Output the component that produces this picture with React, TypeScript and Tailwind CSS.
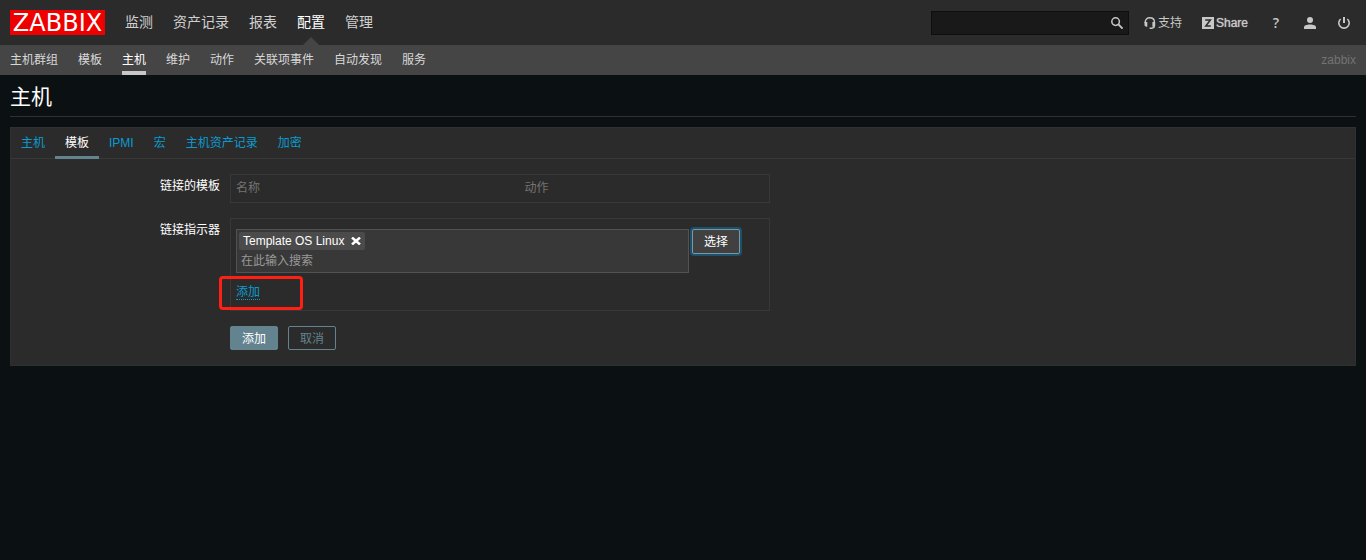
import { clsx } from "clsx";

const mainMenu = ["监测", "资产记录", "报表", "配置", "管理"];
const subMenu = ["主机群组", "模板", "主机", "维护", "动作", "关联项事件", "自动发现", "服务"];
const tabs = ["主机", "模板", "IPMI", "宏", "主机资产记录", "加密"];

function SearchIcon() {
    return (
        <svg width="12" height="12" viewBox="0 0 12 12" fill="none" stroke="#c8c8c8" aria-hidden="true">
            <circle cx="4.6" cy="4.6" r="3.8" strokeWidth="1.5" />
            <path d="M7.4 7.4l4.2 4.2" strokeWidth="1.9" />
        </svg>
    );
}

function SupportIcon() {
    return (
        <svg width="12" height="12" viewBox="0 0 12 12" aria-hidden="true">
            <path d="M1.2 6V5.2C1.2 2.6 3.1.8 5.8.8s4.6 1.8 4.6 4.4V8.6c0 1.7-1 2.6-2.6 2.6H5.6" fill="none" stroke="#c8c8c8" strokeWidth="1.4" />
            <path d="M.5 5h2.8v4.8H2L.5 8.4zM8.4 5h2.7v3.4L9.8 9.8H8.4z" fill="#c8c8c8" />
        </svg>
    );
}

function ShareIcon() {
    return (
        <svg width="12" height="12" viewBox="0 0 12 12" aria-hidden="true">
            <rect width="12" height="12" fill="#c8c8c8" />
            <path d="M3.2 3h5.2L3.8 9h5" fill="none" stroke="#2b2b2b" strokeWidth="1.5" />
        </svg>
    );
}

function UserIcon() {
    return (
        <svg width="12" height="12" viewBox="0 0 12 12" fill="#c8c8c8" aria-hidden="true">
            <circle cx="6" cy="3" r="3" />
            <path d="M0 12v-1.6C0 8.6 2.6 7.6 6 7.6s6 1 6 2.8V12z" />
        </svg>
    );
}

function PowerIcon() {
    return (
        <svg width="12" height="12" viewBox="0 0 12 12" fill="none" stroke="#c8c8c8" aria-hidden="true">
            <path d="M2.6 2a5.2 5.2 0 1 0 6.8 0" strokeWidth="1.6" />
            <path d="M6 0v6" strokeWidth="2" />
        </svg>
    );
}

function Header() {
    return (
        <header>
            <div className="flex h-[45px] items-center justify-between bg-[#2b2b2b] px-[10px]">
                <div className="flex items-center gap-5">
                    <a href="#" className="flex h-[25px] w-[95px] items-center justify-center bg-[#ee0000] font-['DejaVu_Sans'] text-[24px] leading-6 text-white">
                        ZABBIX
                    </a>
                    <nav className="flex gap-5 text-[14px] leading-[45px]">
                        {mainMenu.map((item) => (
                            <a
                                key={item}
                                href="#"
                                className={clsx("relative h-[45px]", item === "配置" ? "text-white" : "text-[#d0d0d0]")}
                            >
                                {item}
                                {item === "配置" && (
                                    <svg className="absolute bottom-0 left-1/2 -translate-x-1/2" width="16" height="8" viewBox="0 0 16 8">
                                        <path d="M0 8l8-8 8 8z" fill="#454545" />
                                    </svg>
                                )}
                            </a>
                        ))}
                    </nav>
                </div>
                <div className="flex h-6 items-center text-[#c8c8c8]">
                    <form className="relative mr-[15px]">
                        <input
                            type="text"
                            aria-label="搜索"
                            className="block h-6 w-[198px] border border-[#0f0f0f] bg-[#191919] pr-6 pl-1 outline-none"
                        />
                        <button type="button" aria-label="搜索" className="absolute top-[6px] right-[6px]">
                            <SearchIcon />
                        </button>
                    </form>
                    <a href="#" className="mr-5 flex items-center gap-[2px]">
                        <SupportIcon />
                        支持
                    </a>
                    <a href="#" className="mr-[22px] flex items-center gap-[2px] text-shadow-[0_0_1px_#c8c8c8]">
                        <ShareIcon />
                        Share
                    </a>
                    <div className="flex items-center gap-[22px] pr-[6px]">
                        <a href="#" className="w-3 text-center font-['Open_Sans'] text-[14px] font-semibold">?</a>
                        <a href="#" aria-label="用户"><UserIcon /></a>
                        <a href="#" aria-label="登出"><PowerIcon /></a>
                    </div>
                </div>
            </div>
            <div className="flex h-[30px] justify-between bg-[#454545] px-[10px] leading-[30px]">
                <nav className="flex gap-5">
                    {subMenu.map((item) => (
                        <a
                            key={item}
                            href="#"
                            className={clsx("h-[30px]", item === "主机" ? "border-b-4 border-[#c8c8c8] text-white" : "text-[#d8d8d8]")}
                        >
                            {item}
                        </a>
                    ))}
                </nav>
                <span className="text-[#737373]">zabbix</span>
            </div>
        </header>
    );
}

function TemplateForm() {
    return (
        <form className="grid grid-cols-[209px_540px] gap-x-[10px] gap-y-[15px] py-[15px]">
            <span className="text-right leading-6 text-white">链接的模板</span>
            <div className="border border-[#383838]">
                <table className="w-full text-left leading-[27px] text-[#737373]">
                    <thead>
                        <tr>
                            <th className="w-[54%] px-[5px] py-0 font-normal">名称</th>
                            <th className="px-[3px] py-0 font-normal">动作</th>
                        </tr>
                    </thead>
                </table>
            </div>

            <label htmlFor="template" className="text-right leading-6 text-white">链接指示器</label>
            <div className="relative border border-[#383838] px-[5px] py-[10px]">
                <div className="flex items-start gap-[3px]">
                    <div className="h-11 w-[453px] border border-[#525252] bg-[#383838] p-[2px]">
                        <span className="flex h-[18px] w-fit items-center gap-[7px] rounded-[2px] bg-[#4b4b4b] px-1 text-white">
                            Template OS Linux
                            <button type="button" aria-label="移除">
                                <svg width="10" height="8" viewBox="0 0 10 8" stroke="#fff" strokeWidth="2.6">
                                    <path d="M1 .6l8 6.8M9 .6L1 7.4" />
                                </svg>
                            </button>
                        </span>
                        <input
                            id="template"
                            type="text"
                            placeholder="在此输入搜索"
                            className="block h-[22px] w-full bg-transparent px-[2px] text-white outline-none placeholder:text-[#999999]"
                        />
                    </div>
                    <button type="button" className="h-[25px] rounded-[2px] border border-[#7c98a1] bg-[#414141] px-[11px] text-white shadow-[0_0_0_2px_#1c516b]">
                        选择
                    </button>
                </div>
                <a href="#" className="mt-[11px] block h-4 w-fit border-b border-dotted border-[#0a9bd0] leading-4 text-[#0a9bd0]">
                    添加
                </a>
                {/* red frame around the add link */}
                <div className="pointer-events-none absolute bottom-0 -left-3 h-[34px] w-[84px] rounded-[4px] border-3 border-[#ff2013]" />
            </div>

            <div className="col-start-2 flex gap-[10px]">
                <button type="button" className="h-6 rounded-[2px] border border-[#63838e] bg-[#63838e] px-[11px] leading-6 text-white">
                    添加
                </button>
                <button type="button" className="h-6 rounded-[2px] border border-[#63838e] px-[11px] leading-6 text-[#63838e]">
                    取消
                </button>
            </div>
        </form>
    );
}

export default function App() {
    return (
        <div className="min-h-screen bg-[#0b1013] font-['Liberation_Sans','Noto_Sans_CJK_SC',sans-serif] text-[12px] leading-4">
            <Header />
            <main className="px-[10px]">
                <h1 className="mb-[10px] h-[42px] border-b border-[#303030] text-[21px] leading-[44px] text-white">主机</h1>
                <section className="border border-[#303030] bg-[#2b2b2b]">
                    <div className="flex h-[31px] border-b border-[#383838] leading-[30px]">
                        {tabs.map((tab) => (
                            <a
                                key={tab}
                                href="#"
                                className={clsx("h-[31px] px-[10px]", tab === "模板" ? "border-b-3 border-[#63838e] text-white" : "text-[#0a9bd0]")}
                            >
                                {tab}
                            </a>
                        ))}
                    </div>
                    <TemplateForm />
                </section>
            </main>
        </div>
    );
}
